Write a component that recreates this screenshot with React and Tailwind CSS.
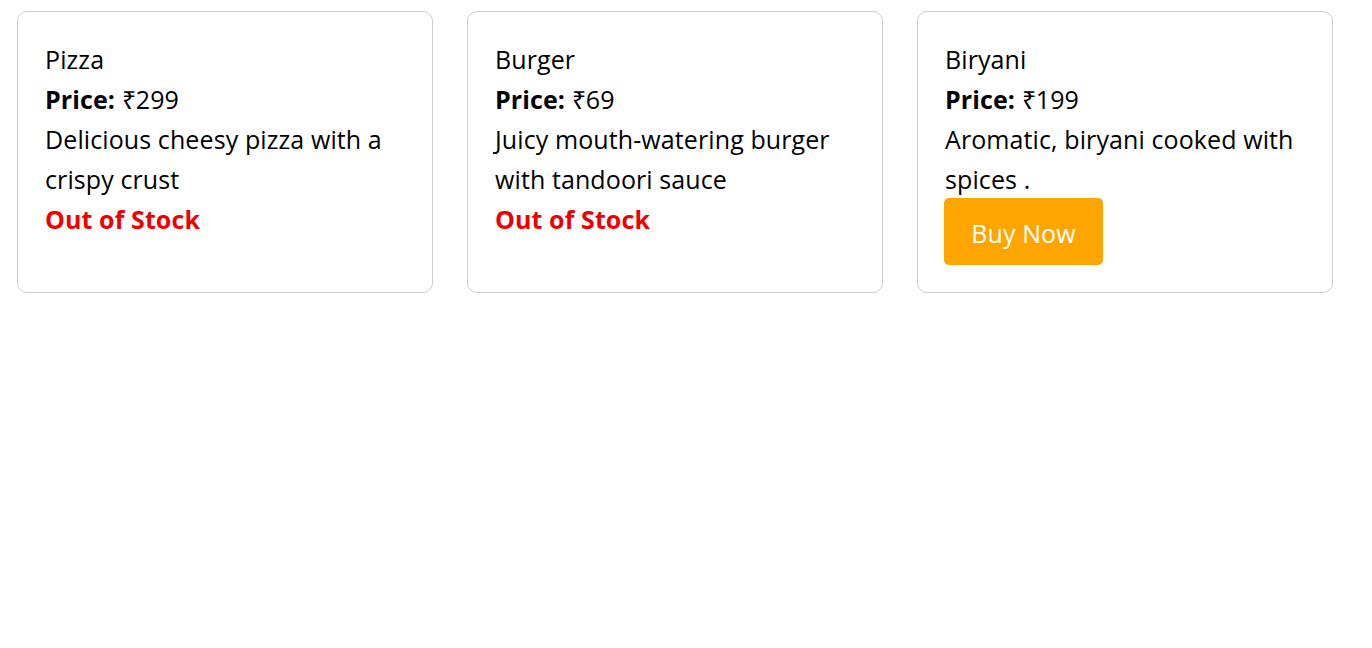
const items = [
  {
    name: "Pizza",
    price: 299,
    desc: "Delicious cheesy pizza with a crispy crust",
    inStock: false,
  },
  {
    name: "Burger",
    price: 69,
    desc: "Juicy mouth-watering burger with tandoori sauce",
    inStock: false,
  },
  {
    name: "Biryani",
    price: 199,
    desc: "Aromatic, biryani cooked with spices .",
    inStock: true,
  },
];

function Card({ item }) {
  return (
    <div className="w-[416px] rounded-[10px] border border-[#cccccc] bg-white pl-[27px] pr-[27px] pt-[27px] pb-[27px] text-[25px] leading-[40px] text-black tracking-[0.1px]">
      <div>{item.name}</div>
      <div>
        <span className="font-bold">Price:</span> ₹{item.price}
      </div>
      <div>{item.desc}</div>
      {item.inStock ? (
        <button className="mt-[-1px] ml-[-1px] h-[67px] w-[159px] rounded-[5px] bg-[#ffa500] pt-[2px] text-[25px] text-white">
          Buy Now
        </button>
      ) : (
        <div className="font-bold text-[#ee0000]">Out of Stock</div>
      )}
    </div>
  );
}

export default function App() {
  return (
    <div className="flex items-stretch gap-[34px] pl-[17px] pt-[11px] font-['Open_Sans',sans-serif]">
      {items.map((it) => (
        <Card key={it.name} item={it} />
      ))}
    </div>
  );
}
